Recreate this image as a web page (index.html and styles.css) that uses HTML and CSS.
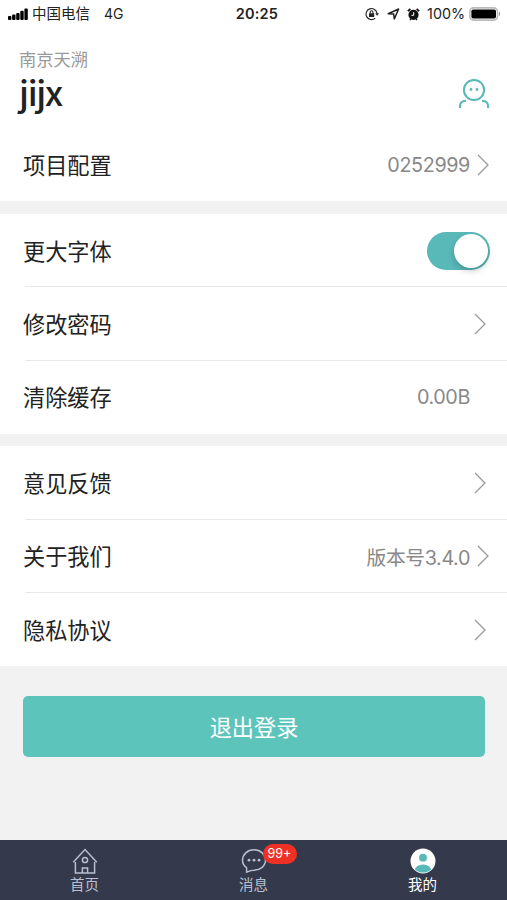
FILE: index.html
```html
<!DOCTYPE html>
<html lang="zh-CN">
<head>
    <meta charset="UTF-8">
    <meta name="viewport" content="width=device-width, initial-scale=1.0">
    <title>我的</title>
    <link rel="stylesheet" href="styles.css">
</head>
<body>
    <div class="status-bar">
        <div class="status-left">
            <svg class="signal" width="20" height="12" viewBox="0 0 20 12">
                <rect x="0" y="8" width="3.4" height="4" rx="1"/>
                <rect x="4.1" y="6.6" width="3.4" height="5.4" rx="1"/>
                <rect x="8.2" y="5" width="3.4" height="7" rx="1"/>
                <rect x="12.3" y="2.8" width="3.4" height="9.2" rx="1"/>
                <rect x="16.4" y="0.4" width="3.4" height="11.6" rx="1"/>
            </svg>
            <span class="carrier">中国电信</span>
            <span class="network">4G</span>
        </div>
        <div class="status-time">20:25</div>
        <div class="status-right">
            <svg width="14" height="14" viewBox="0 0 14 14" fill="none" stroke="#222" stroke-width="1.1">
                <path d="M10.2 11.2A5.5 5.5 0 1 1 12 6.4"/>
                <path d="M10.2 6.2h3.8l-1.9 2.6z" fill="#222" stroke="none"/>
                <rect x="4" y="6.2" width="5.2" height="3.8" rx=".5" fill="#222" stroke="none"/>
                <path d="M5.2 6.4V5.2a1.4 1.4 0 0 1 2.8 0v1.2"/>
            </svg>
            <svg class="location" width="13" height="12" viewBox="0 0 13 12" fill="none" stroke="#222" stroke-width="1.5" stroke-linejoin="round">
                <path d="M1.2 5.8L11.6 1 7.3 11 6.7 6.1z"/>
            </svg>
            <svg class="alarm" width="13" height="13" viewBox="0 0 13 13" fill="none">
                <circle cx="6.5" cy="6.8" r="5.1" fill="#111"/>
                <path d="M.8 3.2L3.4 1M12.2 3.2L9.6 1" stroke="#111" stroke-width="1.7"/>
                <path d="M3 12l1-1.2M10 12l-1-1.2" stroke="#111" stroke-width="1.3"/>
                <path d="M6.7 4.1v3.2H4.4" stroke="#fff"/>
            </svg>
            <span class="percent">100%</span>
            <svg class="battery" width="32" height="14" viewBox="0 0 32 14">
                <rect x=".9" y=".9" width="27.6" height="12.2" rx="3.6" fill="#fff" stroke="#bbb" stroke-width="1.6"/>
                <rect x="2.4" y="2.4" width="24.6" height="9.2" rx="1.8"/>
                <path d="M30 4.8c1.5.5 1.5 3.9 0 4.4z" fill="#999"/>
            </svg>
        </div>
    </div>

    <header class="profile">
        <div>
            <div class="company">南京天溯</div>
            <h1 class="username">jijx</h1>
        </div>
        <svg class="avatar" width="32" height="32" viewBox="0 0 32 32" fill="none" stroke="#59b8b8" stroke-width="2">
            <circle cx="16" cy="12" r="10.1"/>
            <circle cx="13" cy="11.5" r="1.4" fill="#59b8b8" stroke="none"/>
            <circle cx="19" cy="11.5" r="1.4" fill="#59b8b8" stroke="none"/>
            <path d="M2 30v-2.2Q2 23 8 22.7M30 30v-2.2Q30 23 24 22.7"/>
        </svg>
    </header>

    <main>
        <section class="group">
            <div class="row row-first">
                <span class="label">项目配置</span>
                <span class="value">0252999</span>
                <svg class="arrow" viewBox="0 0 12 22"><path d="M1 1l10 10L1 21"/></svg>
            </div>
        </section>

        <section class="group">
            <div class="row">
                <span class="label">更大字体</span>
                <span class="switch"><span class="knob"></span></span>
            </div>
            <div class="row">
                <span class="label">修改密码</span>
                <svg class="arrow arrow-only" viewBox="0 0 12 22"><path d="M1 1l10 10L1 21"/></svg>
            </div>
            <div class="row">
                <span class="label">清除缓存</span>
                <span class="value value-only">0.00B</span>
            </div>
        </section>

        <section class="group">
            <div class="row">
                <span class="label">意见反馈</span>
                <svg class="arrow arrow-only" viewBox="0 0 12 22"><path d="M1 1l10 10L1 21"/></svg>
            </div>
            <div class="row">
                <span class="label">关于我们</span>
                <span class="value">版本号3.4.0</span>
                <svg class="arrow" viewBox="0 0 12 22"><path d="M1 1l10 10L1 21"/></svg>
            </div>
            <div class="row">
                <span class="label">隐私协议</span>
                <svg class="arrow arrow-only" viewBox="0 0 12 22"><path d="M1 1l10 10L1 21"/></svg>
            </div>
        </section>

        <button class="logout" type="button">退出登录</button>
    </main>

    <nav class="tab-bar">
        <div class="tab">
            <svg width="26" height="26" viewBox="0 0 26 26" fill="none" stroke="#b9bfd1" stroke-width="1.5">
                <path d="M1.2 14.2L13 1.5l11.8 12.7M3.4 14v11h19.2V14"/>
                <circle cx="13" cy="12" r="2.6"/>
                <path d="M10.4 25v-5h5.2v5"/>
            </svg>
            <span>首页</span>
        </div>
        <div class="tab">
            <div class="tab-icon">
                <svg width="26" height="26" viewBox="0 0 26 26" fill="none" stroke="#b9bfd1" stroke-width="1.5">
                    <path d="M5.6 24.2v-4.5C2.8 17.8 1.5 15.2 1.5 12.3 1.5 6.4 6.500 1.8 13 1.8s11.5 4.6 11.5 10.500S19.5 21.800 13 22.200c-1.400 0-2.400.1-3.200.4z"/>
                    <g fill="#b9bfd1" stroke="none">
                        <circle cx="8" cy="12.2" r="1.4"/>
                        <circle cx="13" cy="12.2" r="1.4"/>
                        <circle cx="18" cy="12.2" r="1.4"/>
                    </g>
                </svg>
                <span class="badge">99+</span>
            </div>
            <span>消息</span>
        </div>
        <div class="tab active">
            <svg width="26" height="26" viewBox="0 0 26 26">
                <defs>
                    <clipPath id="face"><circle cx="13" cy="13" r="11.5"/></clipPath>
                </defs>
                <circle cx="13" cy="13" r="12.5" fill="#fff"/>
                <circle cx="13" cy="9.7" r="3.9" fill="#59b8b8"/>
                <ellipse cx="13" cy="22.5" rx="8.4" ry="6" fill="#59b8b8" clip-path="url(#face)"/>
            </svg>
            <span>我的</span>
        </div>
    </nav>
</body>
</html>
```
FILE: styles.css
```css
* {
    box-sizing: border-box;
}
body {
    font-family: Inter, "Noto Sans CJK SC", sans-serif;
    margin: 0;
    height: 900px;
    display: flex;
    flex-direction: column;
    background-color: #f2f2f2;
    color: #222;
    overflow: hidden;
}
.status-bar {
    display: grid;
    grid-template-columns: 1fr auto 1fr;
    align-items: center;
    height: 28px;
    padding: 0 6px 0 8px;
    background: #fff;
    font-size: 14.5px;
    line-height: 28px;
}
.status-left, .status-right {
    display: flex;
    align-items: center;
}
.status-right {
    justify-content: flex-end;
}
.carrier {
    margin-left: 4px;
}
.network {
    margin-left: 14px;
    font-size: 14px;
}
.status-time {
    padding-left: 5px;
    font-size: 14.5px;
    font-weight: 600;
    letter-spacing: 0.2px;
}
.location {
    margin-left: 8px;
}
.alarm {
    margin-left: 7px;
}
.percent {
    margin: 0 4px 0 7px;
    font-size: 14.3px;
}
.profile {
    display: flex;
    justify-content: space-between;
    height: 101px;
    padding: 21px 17px 0 19px;
    background: #fff;
}
.company {
    color: #999;
    font-size: 17.3px;
    line-height: 22px;
}
.username {
    margin: 0;
    font-family: "Noto Sans CJK SC", sans-serif;
    font-size: 34.5px;
    font-weight: 500;
    line-height: 40px;
    letter-spacing: -1.3px;
}
.avatar {
    margin-top: 29px;
}
.group {
    margin-bottom: 12px;
    background: #fff;
}
.group:first-of-type {
    margin-bottom: 13px;
}
.row {
    position: relative;
    display: flex;
    align-items: center;
    height: 73.4px;
    padding: 0 17px 0 23px;
}
.row-first {
    height: 72px;
}
.row + .row::before {
    content: "";
    position: absolute;
    top: -1px;
    left: 25px;
    right: 0;
    height: 1px;
    background: #e8e8e8;
}
.label {
    flex: 1;
    padding-bottom: 2px;
    font-size: 22.2px;
}
.value {
    color: #888;
    font-size: 19.8px;
    letter-spacing: -0.4px;
}
.value-only {
    margin-right: 20px;
}
.arrow {
    width: 12px;
    height: 22px;
    margin-left: 7px;
    margin-right: 1px;
    fill: none;
    stroke: #999;
    stroke-width: 1.3;
}
.arrow-only {
    margin-right: 4px;
}
.switch {
    display: flex;
    align-items: center;
    justify-content: flex-end;
    width: 63px;
    height: 38px;
    padding: 2px;
    border-radius: 19px;
    background: #59b8b8;
}
.knob {
    width: 34px;
    height: 34px;
    border-radius: 50%;
    background: #fff;
    box-shadow: 0 3px 6px rgba(0, 0, 0, 0.2);
}
.group:last-of-type {
    margin-bottom: 0;
}
.logout {
    display: block;
    width: 462px;
    height: 61px;
    margin: 30px 0 0 23px;
    padding: 0 0 2px;
    border: none;
    border-radius: 5px;
    background: #5dc4bc;
    color: #fff;
    font-family: inherit;
    font-size: 22.2px;
}
.tab-bar {
    display: grid;
    grid-template-columns: repeat(3, 1fr);
    height: 60px;
    margin-top: auto;
    background: #343a4b;
}
.tab {
    display: flex;
    flex-direction: column;
    align-items: center;
    padding-top: 8px;
    color: #b9bfd1;
    font-size: 14.5px;
    line-height: 21px;
}
.tab svg {
    display: block;
}
.tab-icon {
    position: relative;
}
.badge {
    position: absolute;
    top: -4px;
    left: 22px;
    width: 34px;
    height: 20px;
    border-radius: 10px;
    background: #ee3124;
    color: #fff;
    font-size: 12.5px;
    line-height: 20px;
    text-align: center;
}
.active {
    color: #fff;
}
```
